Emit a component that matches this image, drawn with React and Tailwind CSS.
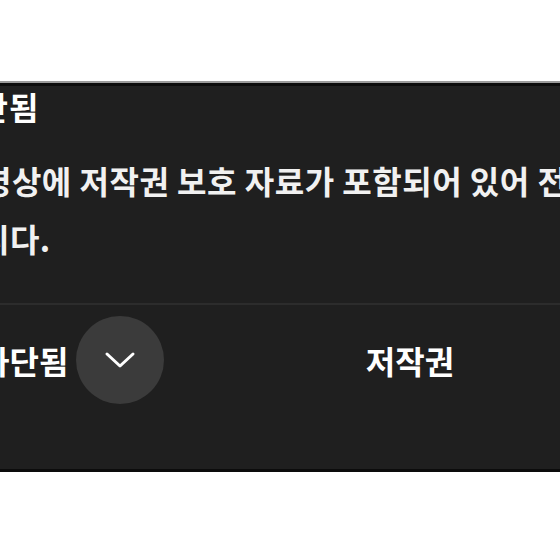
export default function App() {
  return (
    <div className="h-[560px] overflow-hidden bg-white font-['Noto_Sans_CJK_KR','Noto_Sans',sans-serif] text-white">
      <div className="h-[81px]" />
      <div className="border-t-2 border-[#9b9b9b] bg-[#0c0c0c] py-[3px]">
        <div className="bg-[#1f1f1f] overflow-hidden">
          {/* Header */}
          <div className="ml-[-52px] whitespace-nowrap text-[32px] font-bold leading-[40px] tracking-[1px]">차단됨</div>
          <div className="ml-[-48px] mt-[25px] whitespace-nowrap text-[32px] font-bold leading-[58px] tracking-[0.5px] text-[#f1f1f1]">
            <div>동영상에 저작권 보호 자료가 포함되어 있어 전 세계에서 차단되었</div>
            <div className="ml-[-2px]">습니다.</div>
          </div>
          <div className="mt-[36px] h-[2px] bg-[#2c2c2c]" />

          {/* Row */}
          <div className="ml-[-20px] flex items-center pt-[11px] pb-[65px]">
            <div className="flex w-[321px] items-center">
              <span className="whitespace-nowrap text-[32px] font-bold">차단됨</span>
              <button className="ml-[8px] flex h-[88px] w-[88px] items-center justify-center rounded-full bg-[#3b3b3b]">
                <svg width="32" height="18" viewBox="0 0 32 18" fill="none">
                  <path d="M3 3 L16 15 L29 3" stroke="white" strokeWidth="3" strokeLinecap="round" strokeLinejoin="round" />
                </svg>
              </button>
            </div>
            <div className="w-[218px] text-center text-[32px] font-bold">저작권</div>
          </div>
        </div>
      </div>
    </div>
  );
}
